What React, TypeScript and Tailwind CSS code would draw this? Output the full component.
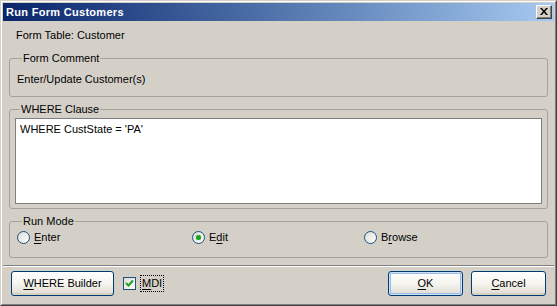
import React from "react";

const font = { fontFamily: '"Liberation Sans", Arial, sans-serif' };

function U({ children }: { children: React.ReactNode }) {
  return <span className="underline underline-offset-[2px] decoration-[1px]">{children}</span>;
}

function Radio({ checked, children }: { checked?: boolean; children: React.ReactNode }) {
  return (
    <div className="flex items-center gap-[4px] h-[13px]">
      <div className="w-[13px] h-[13px] rounded-full border border-[#1c5180] bg-gradient-to-br from-[#dcdcd5] to-white flex items-center justify-center">
        {checked && <div className="w-[5px] h-[5px] rounded-full bg-[#21a121] shadow-[0_0_1px_#55d355]" />}
      </div>
      <span className="leading-[13px]">{children}</span>
    </div>
  );
}

function XpButton({ children, def, w }: { children: React.ReactNode; def?: boolean; w: string }) {
  return (
    <div
      className={`${w} h-[25px] rounded-[3px] border border-[#003c74] bg-gradient-to-b from-white via-[#f5f4ef] to-[#dedbd0] flex items-center justify-center ${
        def ? "shadow-[inset_0_0_0_1px_#cde0f7,inset_0_0_0_2px_#99bbea]" : "shadow-[inset_0_-2px_0_#d6d0c5]"
      }`}
    >
      <span className="leading-[13px]">{children}</span>
    </div>
  );
}

export default function App() {
  return (
    <div className="w-[557px] h-[306px] text-[11px] text-black" style={font}>
      <div className="w-full h-full bg-[#d4d0c8] border border-t-[#d4d0c8] border-l-[#d4d0c8] border-r-[#404040] border-b-[#404040]">
        <div className="w-full h-full border border-t-white border-l-white border-r-[#808080] border-b-[#808080] p-[1px] flex flex-col">
          {/* Title bar */}
          <div className="h-[18px] bg-gradient-to-r from-[#0a246a] to-[#a6caf0] flex items-center justify-between pl-[3px] pr-[2px]">
            <span className="text-white font-bold text-[11px] tracking-[0.3px] leading-[13px]">Run Form Customers</span>
            <div className="w-[16px] h-[14px] bg-[#d4d0c8] border border-t-white border-l-white border-r-[#404040] border-b-[#404040] flex items-center justify-center shadow-[inset_-1px_-1px_0_#808080]">
              <svg width="8" height="7" viewBox="0 0 8 7" className="mb-[1px]">
                <path d="M0 0h2l2 2.5L6 0h2L5 3.5 8 7H6L4 4.5 2 7H0l3-3.5z" fill="#000" />
              </svg>
            </div>
          </div>

          {/* Body */}
          <div className="px-[6px] pt-[8px] flex flex-col">
            <div className="pl-[7px] leading-[13px]">Form Table: Customer</div>

            <fieldset className="mt-[10px] border border-[#a5a297] rounded-[3px] pl-[7px] pt-[8px] pb-[10px]">
              <legend className="ml-[5px] px-[1px] leading-[13px]">Form Comment</legend>
              <div className="leading-[13px]">Enter/Update Customer(s)</div>
            </fieldset>

            <fieldset className="mt-[6px] border border-[#a5a297] rounded-[3px] px-[5px] pt-[2px] pb-[4px]">
              <legend className="ml-[5px] px-[1px] leading-[13px]">WHERE Clause</legend>
              <div className="h-[86px] bg-white border border-[#7f7f7f] px-[4px] pt-[4px] leading-[13px]">
                WHERE CustState = 'PA'
              </div>
            </fieldset>

            <fieldset className="mt-[6px] border border-[#a5a297] rounded-[3px] pl-[7px] pt-[3px] pb-[13px]">
              <legend className="ml-[5px] px-[1px] leading-[13px]">Run Mode</legend>
              <div className="grid grid-cols-[175px_172px_1fr]">
                <Radio>
                  <U>E</U>nter
                </Radio>
                <Radio checked>
                  E<U>d</U>it
                </Radio>
                <Radio>
                  B<U>r</U>owse
                </Radio>
              </div>
            </fieldset>
          </div>

          {/* Separator */}
          <div className="mt-[7px] border-t border-t-[#808080] border-b border-b-white" />

          {/* Buttons */}
          <div className="flex items-center pt-[4px] pl-[8px] pr-[8px]">
            <XpButton w="w-[103px]">
              <U>W</U>HERE Builder
            </XpButton>
            <div className="ml-[9px] flex items-center">
              <div className="w-[13px] h-[13px] border border-[#1c5180] bg-gradient-to-br from-[#dcdcd5] to-white flex items-center justify-center">
                <svg width="9" height="9" viewBox="0 0 9 9">
                  <path d="M1 4l2.5 2.5L8 1.5" stroke="#21a121" strokeWidth="2" fill="none" />
                </svg>
              </div>
              <div className="ml-[4px] h-[17px] px-[1px] border border-dotted border-black flex items-center">
                <span className="leading-[13px]">
                  <U>M</U>DI
                </span>
              </div>
            </div>
            <div className="flex-1" />
            <XpButton w="w-[75px]" def>
              <U>O</U>K
            </XpButton>
            <div className="w-[8px]" />
            <XpButton w="w-[75px]">
              <U>C</U>ancel
            </XpButton>
          </div>
        </div>
      </div>
    </div>
  );
}
